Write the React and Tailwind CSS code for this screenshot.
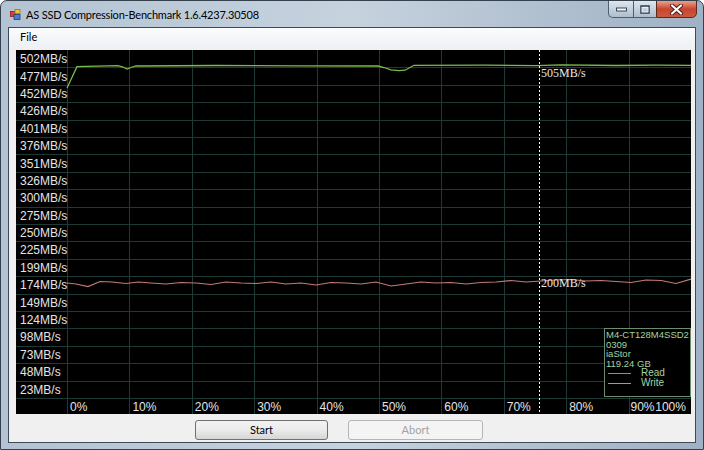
import React from 'react';

const yLabels = ['502', '477', '452', '426', '401', '376', '351', '326', '300', '275', '250', '225', '199', '174', '149', '124', '98', '73', '48', '23'];
const xLabels = ['0%', '10%', '20%', '30%', '40%', '50%', '60%', '70%', '80%'];

const ROW = 17.4;
const COL = 62.4;
const X0 = 51;

const readPts = [
  [51, 38], [61, 16.7], [102, 15.7], [107, 17], [111, 19], [115, 17.5], [120, 16], [200, 15.5], [280, 15.8], [362, 16],
  [368, 17.5], [375, 19.8], [383, 20.6], [389, 20.2], [394, 17.5], [398, 15.3], [470, 15.2], [520, 15.6], [545, 14.8],
  [600, 15.5], [640, 15.1], [675, 15.3],
];

const writePts = [
  [51, 233], [60, 234], [72, 236.5], [84, 231.5], [96, 232], [110, 233.5], [122, 232], [135, 233], [150, 234],
  [165, 232.5], [180, 233], [195, 234.5], [210, 232], [225, 233], [240, 233.5], [255, 232], [270, 234], [285, 233],
  [300, 235], [315, 232.5], [330, 233], [345, 234], [360, 232], [375, 236], [390, 234], [405, 232], [420, 233],
  [435, 232.5], [450, 234], [465, 232.5], [480, 232], [495, 230.5], [510, 232], [525, 231], [540, 230], [555, 229.5],
  [570, 231], [585, 230.5], [600, 231.5], [615, 232.5], [630, 230], [645, 230.5], [660, 233.5], [675, 229],
];

const toPath = (pts) => pts.map((p) => p.join(',')).join(' ');

function TitleIcon() {
  return (
    <svg width="11" height="11" viewBox="0 0 11 11">
      <rect x="0.5" y="2.5" width="5" height="5" fill="#e0402a" stroke="#8a1f10" strokeWidth="0.8" />
      <rect x="5" y="0.5" width="5" height="4" fill="#f4c430" stroke="#9a7a10" strokeWidth="0.8" />
      <rect x="4" y="5.5" width="6" height="5" fill="#4a7fd0" stroke="#1f3f80" strokeWidth="0.8" />
    </svg>
  );
}

function CaptionButtons() {
  return (
    <div className="absolute top-[-1px] right-[6px] flex h-[18px]">
      <div className="w-[25px] h-full flex items-center justify-center bg-gradient-to-b from-[#dfe7ef] to-[#aebdcc] border border-[#4e5e70] border-r-0 rounded-bl-[5px]">
        <svg width="11" height="5" viewBox="0 0 11 5">
          <rect x="0.5" y="1" width="10" height="3" fill="#f4f6f8" stroke="#39475a" strokeWidth="1" />
        </svg>
      </div>
      <div className="w-[23px] h-full flex items-center justify-center bg-gradient-to-b from-[#dfe7ef] to-[#aebdcc] border border-[#4e5e70] border-r-0">
        <svg width="10" height="9" viewBox="0 0 10 9">
          <rect x="1" y="1" width="8" height="7" fill="none" stroke="#39475a" strokeWidth="1.6" />
          <rect x="2" y="2.5" width="6" height="4.5" fill="none" stroke="#f4f6f8" strokeWidth="0.8" />
        </svg>
      </div>
      <div className="w-[41px] h-full flex items-center justify-center bg-gradient-to-b from-[#e9a090] via-[#c9442e] to-[#c85a3e] border border-[#5a2a20] rounded-br-[5px]">
        <svg width="13" height="11" viewBox="0 0 13 11">
          <path d="M2 1.5 L11 9.5 M11 1.5 L2 9.5" stroke="#4a1a14" strokeWidth="4" strokeLinecap="round" />
          <path d="M2 1.5 L11 9.5 M11 1.5 L2 9.5" stroke="#ffffff" strokeWidth="2.2" strokeLinecap="round" />
        </svg>
      </div>
    </div>
  );
}

function Chart() {
  return (
    <div className="relative ml-[7px] mt-[3px] w-[675px] h-[364px] bg-black font-['Liberation_Sans',Arial,sans-serif] text-[12px] text-[#e4e4e4]">
      <svg className="absolute inset-0" width="675" height="364">
        {yLabels.map((_, i) => (
          <line key={'h' + i} x1="0" x2="675" y1={ROW * (i + 1) + 0.5} y2={ROW * (i + 1) + 0.5} stroke="#1f3a36" strokeWidth="1" shapeRendering="crispEdges" />
        ))}
        {Array.from({ length: 11 }).map((_, k) => (
          <line key={'v' + k} x1={X0 + COL * k + 0.5} x2={X0 + COL * k + 0.5} y1="0" y2="364" stroke="#1f3a36" strokeWidth="1" shapeRendering="crispEdges" />
        ))}
        <polyline points={toPath(writePts)} fill="none" stroke="#c47a76" strokeWidth="1.2" />
        <polyline points={toPath(readPts)} fill="none" stroke="#78bd4c" strokeWidth="1.3" />
        <line x1="523.5" x2="523.5" y1="0" y2="364" stroke="#ffffff" strokeWidth="1" strokeDasharray="2 2" shapeRendering="crispEdges" />
        <text x="525" y="27" fill="#e8e8e8" fontSize="12" fontFamily="'Liberation Serif', 'Times New Roman', serif">505MB/s</text>
        <text x="525" y="237" fill="#e8e8e8" fontSize="12" fontFamily="'Liberation Serif', 'Times New Roman', serif">200MB/s</text>
      </svg>

      <div className="relative flex flex-col">
        {yLabels.map((v) => (
          <div key={v} className="h-[17.4px] flex items-center pt-[1px] pl-[4px] leading-none whitespace-nowrap">
            {v}MB/s
          </div>
        ))}
        <div className="h-[16px] flex items-center pt-[3px] pl-[51px] leading-none">
          {xLabels.map((l) => (
            <div key={l} className="w-[62.4px] shrink-0 pl-[3px]">{l}</div>
          ))}
          <div className="w-[62.4px] shrink-0 pl-[2px] pr-[5px] flex justify-between">
            <span>90%</span>
            <span>100%</span>
          </div>
        </div>
      </div>

      <div className="absolute right-0 bottom-[17px] w-[87px] h-[69px] bg-black border border-[#6b8d6b] pt-[1px] pl-[1px] text-[9.5px] leading-[9.5px] text-[#a3d3a3] whitespace-nowrap overflow-hidden">
        <div>M4-CT128M4SSD2</div>
        <div>0309</div>
        <div>iaStor</div>
        <div>119.24 GB</div>
        <div className="h-[10px] flex items-center">
          <div className="ml-[2px] w-[23px] h-[1px] bg-[#6fa85a]" />
          <span className="ml-[10px] text-[10px] leading-[10px]">Read</span>
        </div>
        <div className="h-[10px] flex items-center">
          <div className="ml-[2px] w-[23px] h-[1px] bg-[#c48a86]" />
          <span className="ml-[10px] text-[10px] leading-[10px]">Write</span>
        </div>
      </div>
    </div>
  );
}

export default function App() {
  return (
    <div className="relative w-[704px] h-[450px] overflow-hidden flex flex-col bg-gradient-to-r from-[#b3c3d3] via-[#c6d2de] to-[#9fb1c4] border border-[#34414f] rounded-t-[7px] font-['Lato','Open_Sans',sans-serif]">
      {/* title bar */}
      <div className="h-[26px] flex items-center pl-[9px] gap-[5px] text-[11px] tracking-[-0.2px] text-black">
        <TitleIcon />
        <span className="leading-none">AS SSD Compression-Benchmark 1.6.4237.30508</span>
      </div>
      <CaptionButtons />

      {/* client */}
      <div className="flex-1 mx-[7px] mb-[6px] border border-[#3e4a58] bg-[#f0f0f0] flex flex-col">
        <div className="h-[19px] flex items-center pl-[11px] text-[11px] bg-gradient-to-b from-[#fbfcfd] to-[#eef1f5]">
          File
        </div>
        <Chart />
        <div className="mt-[6px] flex gap-[20px] pl-[186px] text-[11px]">
          <button className="w-[133px] h-[20px] rounded-[3px] border border-[#707070] bg-gradient-to-b from-[#f3f3f3] via-[#ebebeb] to-[#d6d6d6] text-black">
            Start
          </button>
          <button className="w-[135px] h-[20px] rounded-[3px] border border-[#b2b6ba] bg-[#f4f4f4] text-[#a3a3a3]">
            Abort
          </button>
        </div>
      </div>
    </div>
  );
}
